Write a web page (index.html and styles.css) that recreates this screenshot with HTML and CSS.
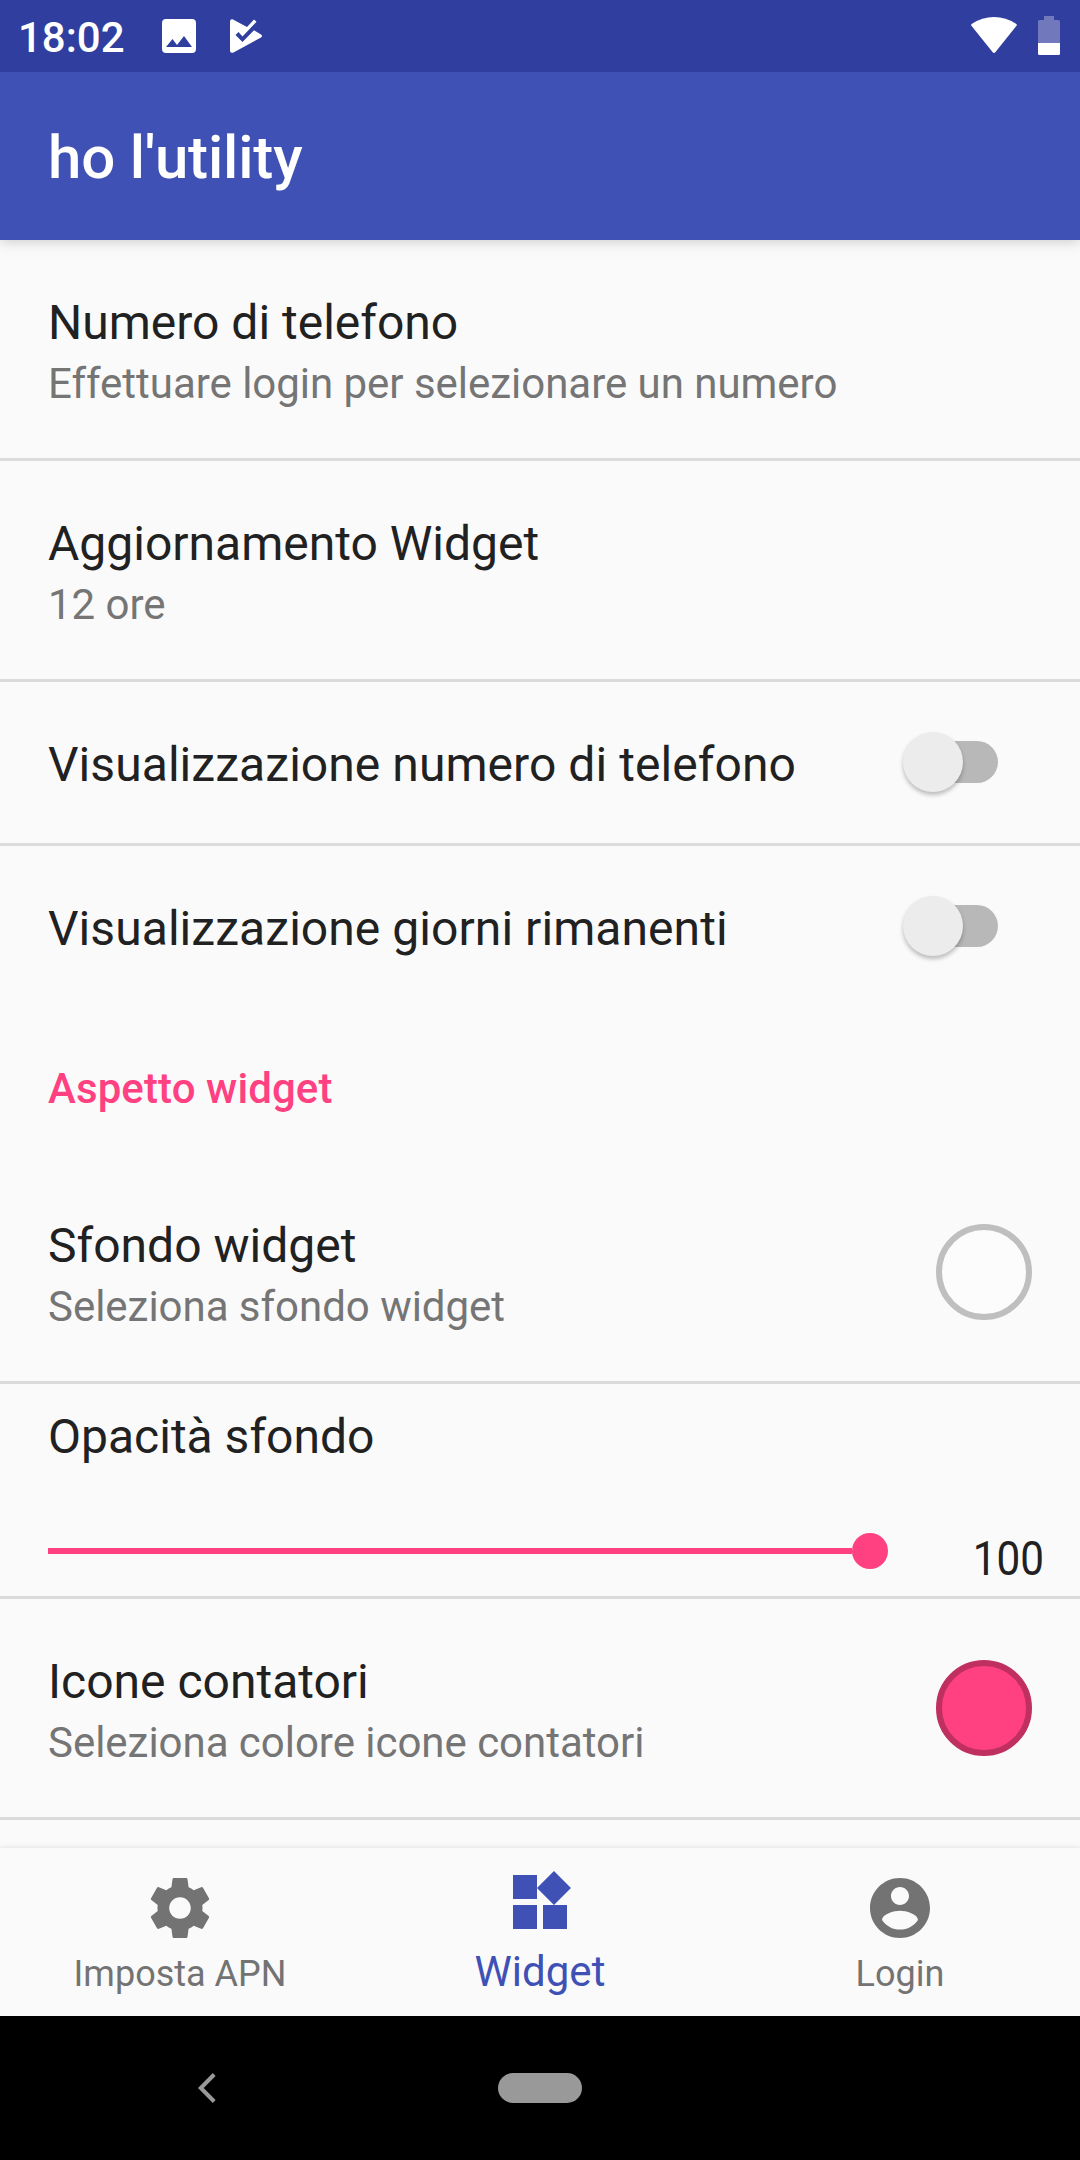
FILE: index.html
```html
<!DOCTYPE html>
<html lang="it">

<head>
    <meta charset="UTF-8">
    <meta name="viewport" content="width=device-width, initial-scale=1.0">
    <title>ho l'utility</title>
    <link rel="stylesheet" href="styles.css">
</head>

<body>
    <!-- Status bar -->
    <div class="status-bar">
        <span class="clock">18:02</span>
        <svg class="icon-image" viewBox="0 0 34 34">
            <path fill="#fff" fill-rule="evenodd" d="M4 0h26a4 4 0 0 1 4 4v26a4 4 0 0 1-4 4H4a4 4 0 0 1-4-4V4a4 4 0 0 1 4-4zM4 28h26l-8-11-7 9-4.500-6z" />
        </svg>
        <svg class="icon-play" viewBox="0 0 32 34">
            <path fill="#fff" d="M2.500 0.300L17 8l7-7.500 2.500 2.300L12.500 17.500l-4-4.500-3 3 7 7L24 11.200l7 4.300q2 1.500 0 3L3 33.700Q0 34.500 0 31.500V2.500Q0 0 2.500 .3z" />
        </svg>
        <svg class="icon-wifi" viewBox="0 0 46 36">
            <path fill="#fff" d="M0 8.300Q0 7.500 1 6.800Q11 0 23 0T45 6.800Q46 7.500 45.700 8.600L24.500 35q-1.500 1.800-3 0z" />
        </svg>
        <svg class="icon-battery" viewBox="0 0 22 39">
            <path fill="#7179bc" d="M6 0h10v4h4.500q1.500 0 1.500 1.500V27H0V5.500Q0 4 1.500 4H6z" />
            <path fill="#fff" d="M0 27h22v10.500q0 1.500-1.500 1.500h-19Q0 39 0 37.500z" />
        </svg>
    </div>

    <header class="toolbar">
        <h1>ho l'utility</h1>
    </header>

    <!-- Settings list -->
    <main class="settings">
        <div class="row">
            <div class="text">
                <div class="title">Numero di telefono</div>
                <div class="summary">Effettuare login per selezionare un numero</div>
            </div>
        </div>
        <div class="row">
            <div class="text">
                <div class="title">Aggiornamento Widget</div>
                <div class="summary">12 ore</div>
            </div>
        </div>
        <div class="row row-switch">
            <div class="title">Visualizzazione numero di telefono</div>
            <div class="switch"><div class="thumb"></div></div>
        </div>
        <div class="row row-switch last">
            <div class="title">Visualizzazione giorni rimanenti</div>
            <div class="switch"><div class="thumb"></div></div>
        </div>
        <h2 class="category">Aspetto widget</h2>
        <div class="row">
            <div class="text">
                <div class="title">Sfondo widget</div>
                <div class="summary">Seleziona sfondo widget</div>
            </div>
            <div class="color"></div>
        </div>
        <div class="row row-slider">
            <div class="title">Opacità sfondo</div>
            <div class="slider">
                <div class="track"></div>
                <div class="knob"></div>
                <div class="value">100</div>
            </div>
        </div>
        <div class="row">
            <div class="text">
                <div class="title">Icone contatori</div>
                <div class="summary">Seleziona colore icone contatori</div>
            </div>
            <div class="color pink"></div>
        </div>
    </main>

    <!-- Bottom tabs -->
    <nav class="tabs">
        <div class="tab">
            <svg viewBox="0 0 24 24">
                <path d="M19.430 12.980c.040-.320.070-.640.070-.980s-.030-.660-.070-.980l2.110-1.650c.190-.150.240-.420.120-.640l-2-3.460c-.120-.220-.390-.300-.610-.220l-2.490 1c-.520-.400-1.080-.730-1.690-.980l-.380-2.650C14.460 2.180 14.250 2 14 2h-4c-.250 0-.460.180-.490.420l-.380 2.650c-.610.250-1.170.590-1.690.980l-2.490-1c-.230-.090-.490 0-.610.220l-2 3.460c-.130.220-.070.490.120.640l2.110 1.650c-.040.320-.070.650-.070.980s.030.660.070.980l-2.110 1.650c-.190.150-.240.420-.120.640l2 3.460c.120.220.390.300.610.220l2.490-1c.520.400 1.080.730 1.690.980l.380 2.650c.030.240.240.420.490.420h4c.250 0 .460-.180.490-.420l.380-2.650c.610-.250 1.170-.590 1.690-.980l2.490 1c.230.090.490 0 .610-.220l2-3.460c.120-.220.070-.490-.120-.640l-2.110-1.650zM12 15.600c-1.980 0-3.600-1.620-3.600-3.600s1.620-3.600 3.600-3.600 3.600 1.620 3.600 3.600-1.620 3.600-3.600 3.600z" />
            </svg>
            <span>Imposta APN</span>
        </div>
        <div class="tab active">
            <svg viewBox="0 0 24 24">
                <path d="M13 13v8h8v-8h-8zM3 21h8v-8H3v8zM3 3v8h8V3H3zm13.660-1.310L11 7.340 16.660 13l5.660-5.660-5.660-5.650z" />
            </svg>
            <span>Widget</span>
        </div>
        <div class="tab">
            <svg viewBox="0 0 24 24">
                <path d="M12 2C6.480 2 2 6.480 2 12s4.480 10 10 10 10-4.480 10-10S17.520 2 12 2zm0 3c1.660 0 3 1.340 3 3s-1.340 3-3 3-3-1.340-3-3 1.340-3 3-3zm0 14.200c-2.500 0-4.710-1.280-6-3.220.030-1.990 4-3.080 6-3.080 1.990 0 5.970 1.090 6 3.080-1.290 1.940-3.500 3.220-6 3.220z" />
            </svg>
            <span>Login</span>
        </div>
    </nav>

    <!-- System navigation -->
    <div class="system-nav">
        <svg class="back" viewBox="0 0 18 30">
            <path d="M16.200 1.500L2.800 15l13.400 13.500" fill="none" stroke="#999" stroke-width="4" />
        </svg>
        <div class="home"></div>
    </div>
</body>

</html>
```

FILE: styles.css
```css
* {
    box-sizing: border-box;
}

body {
    margin: 0;
    width: 1080px;
    height: 2160px;
    overflow: hidden;
    display: flex;
    flex-direction: column;
    font-family: Roboto, sans-serif;
    background-color: #fafafa;
    color: #212121;
}

svg {
    display: block;
    flex-shrink: 0;
}

/* status bar */
.status-bar {
    height: 72px;
    flex-shrink: 0;
    display: flex;
    align-items: flex-start;
    padding: 0 20px 0 18px;
    background-color: #303f9f;
    color: white;
    z-index: 2;
}

.clock {
    width: 144px;
    font-size: 42px;
    font-weight: 500;
    line-height: 75px;
}

.icon-image {
    width: 34px;
    height: 34px;
    margin-top: 19px;
}

.icon-play {
    width: 32px;
    height: 34px;
    margin: 19px auto 0 34px;
}

.icon-wifi {
    width: 46px;
    height: 36px;
    margin: 17px 21px 0 0;
}

.icon-battery {
    width: 22px;
    height: 39px;
    margin-top: 16px;
}

/* toolbar */
.toolbar {
    height: 168px;
    flex-shrink: 0;
    display: flex;
    align-items: center;
    padding: 3px 48px 0;
    background-color: #3f51b5;
    color: white;
    box-shadow: 0 2px 12px rgba(0, 0, 0, 0.18);
    z-index: 1;
}

h1 {
    margin: 0;
    font-size: 60px;
    font-weight: 500;
    letter-spacing: -0.15px;
}

/* list */
.settings {
    flex: 1;
    min-height: 0;
    overflow: hidden;
}

.row {
    height: 221px;
    display: flex;
    justify-content: space-between;
    align-items: center;
    padding: 0 48px;
    border-bottom: 3px solid #dbdbdb;
}

.text {
    padding-top: 5px;
}

.title {
    font-size: 48px;
    line-height: 64px;
}

.summary {
    font-size: 42px;
    line-height: 57px;
    letter-spacing: -0.03px;
    color: #757575;
}

.row-switch {
    height: 164px;
    padding-right: 82px;
}

.row-switch .title {
    padding-top: 4px;
    letter-spacing: 0.06px;
}

.last {
    border-bottom-color: transparent;
}

.switch {
    width: 90px;
    height: 42px;
    margin-bottom: 1px;
    border-radius: 21px;
    background-color: #b8b8b8;
    display: flex;
    align-items: center;
}

.thumb {
    width: 60px;
    height: 60px;
    margin-left: -5px;
    flex-shrink: 0;
    border-radius: 50%;
    background-color: #ececec;
    box-shadow: 0 3px 4px rgba(0, 0, 0, 0.25);
}

.category {
    margin: 0;
    height: 153px;
    padding: 50px 48px 0;
    font-size: 42px;
    font-weight: 500;
    line-height: 57px;
    letter-spacing: 0.1px;
    color: #ff4081;
}

.color {
    width: 96px;
    height: 96px;
    border-radius: 50%;
    border: 6px solid #bfbfbf;
    background-color: #fcfcfc;
}

.pink {
    border-color: #bf3060;
    background-color: #ff4081;
}

.row-slider {
    height: 215px;
    flex-direction: column;
    align-items: stretch;
    padding: 21px 36px 0 48px;
}

.slider {
    height: 91px;
    display: flex;
    align-items: center;
}

.track {
    width: 804px;
    height: 6px;
    background-color: #ff4081;
}

.knob {
    width: 36px;
    height: 36px;
    border-radius: 50%;
    background-color: #ff4081;
}

.value {
    margin-left: auto;
    padding-top: 15px;
    font-size: 48px;
    transform: scaleX(0.88);
    transform-origin: right;
}

/* tabs */
.tabs {
    height: 168px;
    flex-shrink: 0;
    display: flex;
    background-color: #fafafa;
    box-shadow: 0 0 6px rgba(0, 0, 0, 0.12);
    z-index: 1;
}

.tab {
    flex: 1;
    display: flex;
    flex-direction: column;
    align-items: center;
    padding-top: 24px;
    font-size: 36px;
    line-height: 42px;
    color: #737373;
}

.tab svg {
    width: 72px;
    height: 72px;
    margin-bottom: 9px;
    fill: currentColor;
}

.active {
    padding-top: 18px;
    font-size: 42px;
    line-height: 50px;
    color: #3f51b5;
}

/* system navigation */
.system-nav {
    height: 144px;
    flex-shrink: 0;
    display: flex;
    align-items: center;
    padding-left: 198px;
    background-color: black;
    z-index: 1;
}

.back {
    width: 18px;
    height: 30px;
}

.home {
    width: 84px;
    height: 30px;
    margin-left: 282px;
    border-radius: 15px;
    background-color: #999;
}
```
